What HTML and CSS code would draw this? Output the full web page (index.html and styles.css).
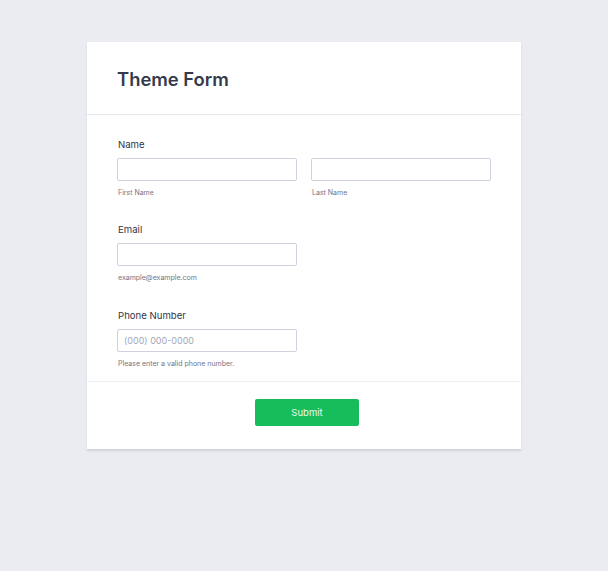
FILE: index.html
```html
<!DOCTYPE html>
<html>
<head>
<meta charset="utf-8">
<link rel="stylesheet" href="styles.css">
</head>
<body>
<div class="card">
  <div class="header"><h1 class="title">Theme Form</h1></div>
  <div class="body">
    <div class="field">
      <div class="label">Name</div>
      <div class="row">
        <div class="col"><div class="input"></div><div class="sub">First Name</div></div>
        <div class="col"><div class="input"></div><div class="sub">Last Name</div></div>
      </div>
    </div>
    <div class="field">
      <div class="label">Email</div>
      <div class="col"><div class="input"></div><div class="sub">example@example.com</div></div>
    </div>
    <div class="field field-last">
      <div class="label">Phone Number</div>
      <div class="col"><div class="input"><span class="ph">(000) 000-0000</span></div><div class="sub">Please enter a valid phone number.</div></div>
    </div>
  </div>
  <div class="footer"><div class="btn">Submit</div></div>
</div>
</body>
</html>
```
FILE: styles.css
```css
html, body { margin: 0; padding: 0; }
body {
  background: #ebecf2;
  font-family: Inter, "Noto Sans", sans-serif;
  width: 608px;
  height: 571px;
  padding-top: 42px;
  box-sizing: border-box;
}
.card {
  margin-left: 87px;
  width: 434px;
  background: #fff;
  box-shadow: 0 2px 2px rgba(80, 90, 130, 0.18);
}
.header {
  height: 72px;
  display: flex;
  align-items: center;
  padding-left: 30px;
  border-bottom: 1px solid #e6e7ee;
}
.title {
  margin: 0;
  font-size: 18.4px;
  font-weight: 600;
  color: #343a4c;
  padding-top: 1px;
}
.body {
  padding: 22px 30px 11px 30px;
  display: flex;
  flex-direction: column;
  gap: 23px;
}
.field-last { margin-top: 1px; }
.label {
  font-size: 9.6px;
  line-height: 16px;
  color: #2f3547;
  padding-left: 1px;
  margin-bottom: 5px;
}
.row { display: flex; gap: 14px; }
.col { width: 180px; }
.input {
  height: 23px;
  box-sizing: border-box;
  border: 1px solid #cfd2de;
  border-radius: 2px;
  display: flex;
  align-items: center;
  padding-left: 6px;
}
.ph { font-size: 9px; color: #a3a7b9; }
.sub {
  margin-top: 6px;
  font-size: 7px;
  line-height: 12px;
  color: #6f7589;
  padding-left: 1px;
}
.footer {
  border-top: 1px solid #eeeff3;
  padding: 17px 0 23px 6px;
  display: flex;
  justify-content: center;
}
.btn {
  width: 104px;
  height: 27px;
  background: #18bd5b;
  border-radius: 2px;
  color: #e9f9ef;
  font-size: 9.5px;
  display: flex;
  align-items: center;
  justify-content: center;
}
```
